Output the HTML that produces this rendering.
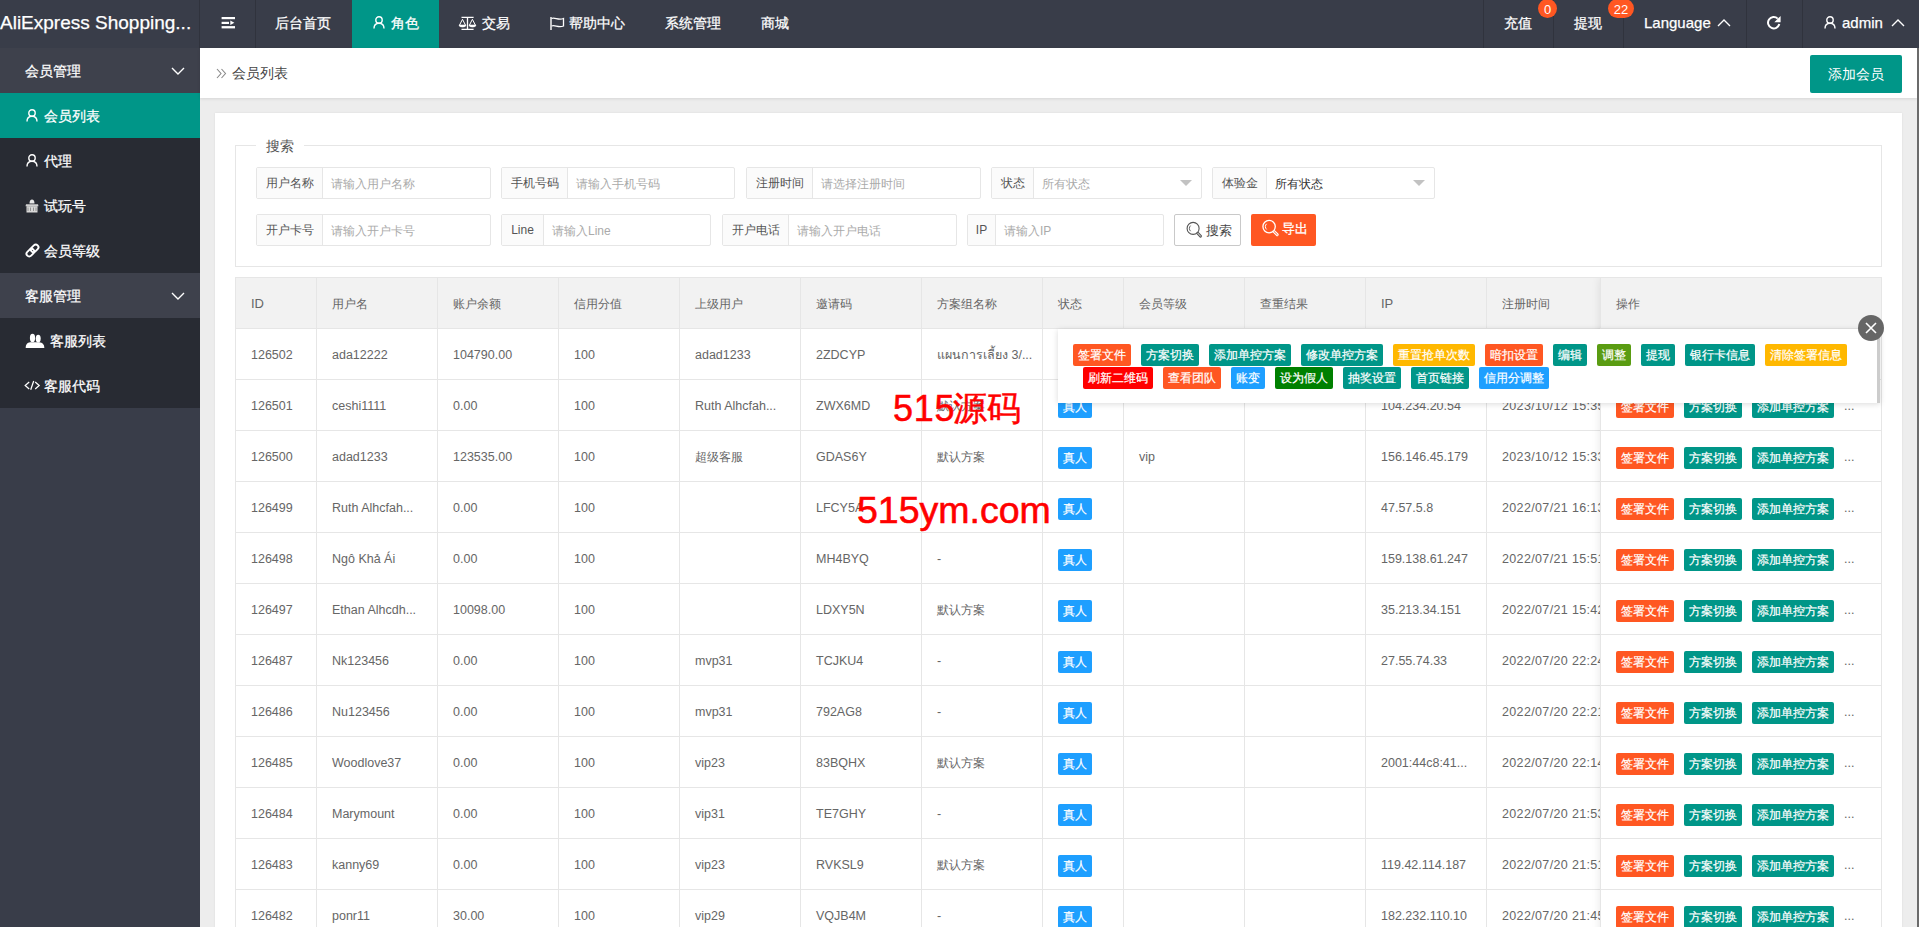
<!DOCTYPE html><html><head><meta charset="utf-8"><style>
*{box-sizing:border-box;margin:0;padding:0}
html,body{width:1919px;height:927px;overflow:hidden}
body{position:relative;background:#ededed;font-family:"Liberation Sans",sans-serif;color:#666;font-size:13px}
.abs{position:absolute}
.hdr{left:0;top:0;width:1919px;height:48px;background:#393D49}
.sep{position:absolute;top:0;width:1px;height:48px;background:#30333d}
.wt{color:#fff;position:absolute;white-space:nowrap;-webkit-text-stroke:0.25px #fff}
.side{left:0;top:48px;width:200px;height:879px;background:#393D49}
.si{position:absolute;left:0;width:200px;height:45px;color:#fff;font-size:14px;line-height:46px;white-space:nowrap;-webkit-text-stroke:0.25px #fff}
.dk{background:#282B33}
.act{background:#009688}
.crumb{left:200px;top:48px;width:1717px;height:50px;background:#fff;box-shadow:0 1px 3px rgba(0,0,0,.1)}
.vbar{left:1917px;top:48px;width:2px;height:879px;background:#6b6b6b}
.card{left:215px;top:113px;width:1687px;height:830px;background:#fff;box-shadow:0 0 2px rgba(0,0,0,.08)}
.fs{left:235px;top:145px;width:1647px;height:122px;border:1px solid #e6e6e6}
.ig{position:absolute;height:32px;border:1px solid #e6e6e6;border-radius:2px;background:#fff}
.ig .lb{position:absolute;left:0;top:0;height:30px;background:#FBFBFB;border-right:1px solid #e6e6e6;color:#555;font-size:12px;line-height:30px;text-align:center;white-space:nowrap}
.ig .ph{position:absolute;top:1px;height:30px;line-height:30px;color:#aaa;font-size:12px;white-space:nowrap}
.tb{left:235px;top:277px;width:1647px;height:700px;border:1px solid #e6e6e6;border-bottom:none;overflow:hidden}
.th{position:absolute;left:0;top:0;width:1647px;height:51px;background:#f2f2f2;border-bottom:1px solid #e6e6e6}
.cell{position:absolute;white-space:nowrap;font-size:12.5px;color:#666;line-height:20px}
.vl{position:absolute;top:0;width:1px;height:700px;background:#e6e6e6}
.hl{position:absolute;left:0;width:1647px;height:1px;background:#e6e6e6}
.btn{position:absolute;height:22px;line-height:22px;padding:0 5px;color:#fff;font-size:12px;border-radius:2px;white-space:nowrap;text-align:center;-webkit-text-stroke:0.2px #fff}
.tag{position:absolute;width:34px;height:22px;line-height:22px;background:#1E9FFF;color:#fff;font-size:12px;border-radius:2px;text-align:center;-webkit-text-stroke:0.2px #fff}
.fixed{position:absolute;left:1364px;top:0;width:283px;height:700px;background:#fff;box-shadow:-1px 0 8px rgba(0,0,0,.08)}
.pop{left:1058px;top:329px;width:822px;height:74px;background:#fff;box-shadow:0 1px 6px rgba(0,0,0,.15)}
</style></head><body>
<div class="abs hdr">
<div class="wt" style="left:0;top:10px;font-size:19px;line-height:26px">AliExpress Shopping...</div>
<div class="sep" style="left:199px"></div>
<div class="sep" style="left:255px"></div>
<div class="sep" style="left:1483px"></div>
<div class="sep" style="left:1553px"></div>
<div class="sep" style="left:1623px"></div>
<div class="sep" style="left:1746px"></div>
<div class="sep" style="left:1802px"></div>
<svg class="abs" style="left:221px;top:17px" width="15" height="12" viewBox="0 0 15 12"><rect x="0.6" y="0" width="13.4" height="2.2" fill="#fff"/><rect x="0.6" y="4.8" width="7.4" height="2.2" fill="#fff"/><rect x="0.6" y="9.1" width="13.4" height="2.3" fill="#fff"/><path d="M9.3 3.4 L13.4 5.8 L9.3 8 Z" fill="#fff"/></svg>
<div class="wt" style="left:275px;top:14px;font-size:14px;line-height:18px">后台首页</div>
<div class="abs" style="left:352px;top:0;width:87px;height:48px;background:#009688"></div>
<svg class="abs" style="left:373px;top:16px" width="12" height="13" viewBox="0 0 12 13"><circle cx="6" cy="4" r="3.2" fill="none" stroke="#fff" stroke-width="1.4"/><path d="M1 12.5 C1 8.5 3 7.2 6 7.2 C9 7.2 11 8.5 11 12.5" fill="none" stroke="#fff" stroke-width="1.4"/></svg>
<div class="wt" style="left:391px;top:14px;font-size:14px;line-height:18px">角色</div>
<svg class="abs" style="left:458px;top:16px" width="20" height="16" viewBox="0 0 20 16"><path d="M3.5 1.4 H15.6 M9.5 1 V13.5 M3.5 13.3 H15.6" stroke="#fff" stroke-width="1.3" fill="none"/><path d="M1.6 9 L4.5 3.3 L7.4 9 M11.5 9 L14.4 3.3 L17.3 9" stroke="#fff" stroke-width="1" fill="none"/><path d="M1 9 H8 A3.5 2 0 0 1 1 9 Z M11 9 H18 A3.5 2 0 0 1 11 9 Z" fill="#fff" stroke="#fff" stroke-width="0.6"/></svg>
<div class="wt" style="left:482px;top:14px;font-size:14px;line-height:18px">交易</div>
<svg class="abs" style="left:550px;top:17px" width="15" height="13" viewBox="0 0 15 13"><path d="M1 0 V13" stroke="#fff" stroke-width="1.4"/><path d="M1.5 1.5 C5 0 8 3.5 13.5 1.5 V9 C8 11 5 7.5 1.5 9" stroke="#fff" stroke-width="1.3" fill="none"/></svg>
<div class="wt" style="left:569px;top:14px;font-size:14px;line-height:18px">帮助中心</div>
<div class="wt" style="left:665px;top:14px;font-size:14px;line-height:18px">系统管理</div>
<div class="wt" style="left:761px;top:14px;font-size:14px;line-height:18px">商城</div>
<div class="wt" style="left:1504px;top:14px;font-size:14px;line-height:18px">充值</div>
<div class="abs" style="left:1538px;top:-1px;width:19px;height:19px;border-radius:10px;background:#FF5722;color:#fff;font-size:13px;line-height:21px;text-align:center">0</div>
<div class="wt" style="left:1574px;top:14px;font-size:14px;line-height:18px">提现</div>
<div class="abs" style="left:1608px;top:-1px;width:26px;height:19px;border-radius:10px;background:#FF5722;color:#fff;font-size:13px;line-height:21px;text-align:center">22</div>
<div class="wt" style="left:1644px;top:13px;font-size:15px;line-height:20px">Language</div>
<svg class="abs" style="left:1717px;top:19px" width="14" height="8" viewBox="0 0 14 8"><path d="M1 7 L7 1 L13 7" stroke="#fff" stroke-width="1.4" fill="none"/></svg>
<svg class="abs" style="left:1767px;top:16px" width="15" height="14" viewBox="0 0 15 14"><path d="M10.7 2.6 A5.7 5.7 0 1 0 12.3 8.0" stroke="#fff" stroke-width="2" fill="none"/><path d="M13.6 0 V6.2 H7.3 Z" fill="#fff"/></svg>
<svg class="abs" style="left:1824px;top:16.4px" width="12" height="13" viewBox="0 0 12 13"><circle cx="6" cy="4" r="3.2" fill="none" stroke="#fff" stroke-width="1.4"/><path d="M1 12.5 C1 8.5 3 7.2 6 7.2 C9 7.2 11 8.5 11 12.5" fill="none" stroke="#fff" stroke-width="1.4"/></svg>
<div class="wt" style="left:1842px;top:13px;font-size:15px;line-height:20px">admin</div>
<svg class="abs" style="left:1891px;top:19px" width="14" height="8" viewBox="0 0 14 8"><path d="M1 7 L7 1 L13 7" stroke="#fff" stroke-width="1.4" fill="none"/></svg>
</div>
<div class="abs side">
<div class="si" style="top:0;padding-left:25px;background:#3e414c">会员管理</div>
<svg class="abs" style="left:171px;top:19px" width="14" height="8" viewBox="0 0 14 8"><path d="M1 1 L7 7 L13 1" stroke="#fff" stroke-width="1.4" fill="none"/></svg>
<div class="si act" style="top:45px;padding-left:44px">会员列表</div>
<svg class="abs" style="left:26px;top:61px" width="12" height="13" viewBox="0 0 12 13"><circle cx="6" cy="4" r="3.2" fill="none" stroke="#fff" stroke-width="1.4"/><path d="M1 12.5 C1 8.5 3 7.2 6 7.2 C9 7.2 11 8.5 11 12.5" fill="none" stroke="#fff" stroke-width="1.4"/></svg>
<div class="si dk" style="top:90px;padding-left:44px">代理</div>
<svg class="abs" style="left:26px;top:106px" width="12" height="13" viewBox="0 0 12 13"><circle cx="6" cy="4" r="3.2" fill="none" stroke="#fff" stroke-width="1.4"/><path d="M1 12.5 C1 8.5 3 7.2 6 7.2 C9 7.2 11 8.5 11 12.5" fill="none" stroke="#fff" stroke-width="1.4"/></svg>
<div class="si dk" style="top:135px;padding-left:44px">试玩号</div>
<svg class="abs" style="left:25px;top:151px" width="14" height="14" viewBox="0 0 14 14"><path d="M4.5 4.5 C4.5 2 5.5 0.6 7 0.6 C8.5 0.6 9.5 2 9.5 4.5 Z" fill="#e8e8e8"/><path d="M1 5.2 H13 L13.5 7.2 H0.5 Z" fill="#cfcfcf"/><rect x="1.5" y="7.2" width="11" height="6.3" fill="#d8d8d8"/><path d="M3 8.5 V12 M5.5 8.5 V12 M8.5 8.5 V12 M11 8.5 V12" stroke="#8a8a8a" stroke-width="0.9"/></svg>
<div class="si dk" style="top:180px;padding-left:44px">会员等级</div>
<svg class="abs" style="left:24px;top:194px" width="17" height="17" viewBox="0 0 17 17"><g transform="rotate(-45 8.5 8.5)"><rect x="1.2" y="5.8" width="8.6" height="5.4" rx="2.7" fill="none" stroke="#fff" stroke-width="1.9"/><rect x="7.2" y="5.8" width="8.6" height="5.4" rx="2.7" fill="none" stroke="#fff" stroke-width="1.9"/></g></svg>
<div class="si" style="top:225px;padding-left:25px;background:#3e414c">客服管理</div>
<svg class="abs" style="left:171px;top:244px" width="14" height="8" viewBox="0 0 14 8"><path d="M1 1 L7 7 L13 1" stroke="#fff" stroke-width="1.4" fill="none"/></svg>
<div class="si dk" style="top:270px;padding-left:50px">客服列表</div>
<svg class="abs" style="left:25px;top:285px" width="20" height="16" viewBox="0 0 20 16"><ellipse cx="7.5" cy="4.9" rx="2.6" ry="4.2" fill="#fff"/><ellipse cx="13.2" cy="5.6" rx="2.5" ry="3.9" fill="#fff"/><path d="M0.7 15 C0.7 11.3 2.2 9.8 5.2 9.3 H14.2 C17.6 9.8 19.3 11.3 19.3 15 Z" fill="#fff"/></svg>
<div class="si dk" style="top:315px;padding-left:44px">客服代码</div>
<svg class="abs" style="left:24px;top:332px" width="17" height="11" viewBox="0 0 17 11"><path d="M5.2 2 L1.2 5.5 L5.2 9 M11.2 2 L15.2 5.5 L11.2 9 M9.7 1 L6.7 9.8" stroke="#fff" stroke-width="1.25" fill="none"/></svg>
</div>
<div class="abs crumb">
<svg class="abs" style="left:16px;top:20px" width="11" height="11" viewBox="0 0 11 11"><path d="M1 1 L5 5.5 L1 10 M5.5 1 L9.5 5.5 L5.5 10" stroke="#888" stroke-width="1.1" fill="none"/></svg>
<div class="abs" style="left:32px;top:16px;font-size:14px;line-height:18px;color:#444;white-space:nowrap">会员列表</div>
<div class="abs" style="left:1610px;top:7px;width:92px;height:38px;background:#009688;border-radius:2px;color:#fff;font-size:14px;line-height:38px;text-align:center">添加会员</div>
</div>
<div class="abs vbar"></div>
<div class="abs card"></div>
<div class="abs fs"></div>
<div class="abs" style="left:256px;top:136px;width:48px;height:20px;background:#fff;color:#555;font-size:14px;line-height:20px;text-align:center">搜索</div>
<div class="ig" style="left:256px;top:167px;width:235px"><div class="lb" style="width:66px">用户名称</div><div class="ph" style="left:74px">请输入用户名称</div></div>
<div class="ig" style="left:501px;top:167px;width:234px"><div class="lb" style="width:66px">手机号码</div><div class="ph" style="left:74px">请输入手机号码</div></div>
<div class="ig" style="left:746px;top:167px;width:235px"><div class="lb" style="width:66px">注册时间</div><div class="ph" style="left:74px">请选择注册时间</div></div>
<div class="ig" style="left:991px;top:167px;width:211px"><div class="lb" style="width:42px">状态</div><div class="ph" style="left:50px">所有状态</div><svg class="abs" style="left:188px;top:12px" width="12" height="7" viewBox="0 0 12 7"><path d="M0 0 H12 L6 6 Z" fill="#c2c2c2"/></svg></div>
<div class="ig" style="left:1212px;top:167px;width:223px"><div class="lb" style="width:54px">体验金</div><div class="ph" style="left:62px;color:#333">所有状态</div><svg class="abs" style="left:200px;top:12px" width="12" height="7" viewBox="0 0 12 7"><path d="M0 0 H12 L6 6 Z" fill="#c2c2c2"/></svg></div>
<div class="ig" style="left:256px;top:214px;width:235px"><div class="lb" style="width:66px">开户卡号</div><div class="ph" style="left:74px">请输入开户卡号</div></div>
<div class="ig" style="left:501px;top:214px;width:210px"><div class="lb" style="width:42px">Line</div><div class="ph" style="left:50px">请输入Line</div></div>
<div class="ig" style="left:722px;top:214px;width:235px"><div class="lb" style="width:66px">开户电话</div><div class="ph" style="left:74px">请输入开户电话</div></div>
<div class="ig" style="left:967px;top:214px;width:197px"><div class="lb" style="width:28px">IP</div><div class="ph" style="left:36px">请输入IP</div></div>
<div class="abs" style="left:1174px;top:214px;width:67px;height:32px;border:1px solid #c9c9c9;border-radius:2px;background:#fff"></div>
<svg class="abs" style="left:1186px;top:221px" width="17" height="17" viewBox="0 0 17 17"><circle cx="7.1" cy="7.4" r="6" stroke="#555" stroke-width="1.1" fill="none"/><path d="M4.6 4.6 A3.8 3.8 0 0 0 4.6 10.2" stroke="#555" stroke-width="0.9" fill="none"/><path d="M11.8 12.2 L14.6 15.2" stroke="#555" stroke-width="2.8" stroke-linecap="round"/><path d="M11.8 12.2 L14.6 15.2" stroke="#fff" stroke-width="0.9" stroke-linecap="round"/></svg>
<div class="abs" style="left:1206px;top:222px;font-size:13px;line-height:18px;color:#444">搜索</div>
<div class="abs" style="left:1251px;top:214px;width:65px;height:32px;border-radius:2px;background:#FF5722"></div>
<svg class="abs" style="left:1262px;top:219px" width="18" height="18" viewBox="0 0 18 18"><circle cx="7.1" cy="7.6" r="6.2" stroke="#fff" stroke-width="1.3" fill="none"/><path d="M4.6 4.8 A3.8 3.8 0 0 0 4.6 10.4" stroke="#fff" stroke-width="1" fill="none"/><path d="M12 12.5 L15.2 15.6" stroke="#fff" stroke-width="3" stroke-linecap="round"/><path d="M12 12.5 L15.2 15.6" stroke="#FF5722" stroke-width="1" stroke-linecap="round"/></svg>
<div class="abs" style="left:1282px;top:219.5px;font-size:13px;line-height:18px;color:#fff;-webkit-text-stroke:0.3px #fff">导出</div>
<div class="abs tb">
<div class="th"></div>
<div class="vl" style="left:80px"></div>
<div class="vl" style="left:201px"></div>
<div class="vl" style="left:322px"></div>
<div class="vl" style="left:443px"></div>
<div class="vl" style="left:564px"></div>
<div class="vl" style="left:685px"></div>
<div class="vl" style="left:806px"></div>
<div class="vl" style="left:887px"></div>
<div class="vl" style="left:1008px"></div>
<div class="vl" style="left:1129px"></div>
<div class="vl" style="left:1250px"></div>
<div class="hl" style="top:50px"></div>
<div class="hl" style="top:101px"></div>
<div class="hl" style="top:152px"></div>
<div class="hl" style="top:203px"></div>
<div class="hl" style="top:254px"></div>
<div class="hl" style="top:305px"></div>
<div class="hl" style="top:356px"></div>
<div class="hl" style="top:407px"></div>
<div class="hl" style="top:458px"></div>
<div class="hl" style="top:509px"></div>
<div class="hl" style="top:560px"></div>
<div class="hl" style="top:611px"></div>
<div class="hl" style="top:662px"></div>
<div class="cell" style="left:15px;top:16px;font-size:13px">ID</div>
<div class="cell" style="left:96px;top:16px;font-size:12px">用户名</div>
<div class="cell" style="left:217px;top:16px;font-size:12px">账户余额</div>
<div class="cell" style="left:338px;top:16px;font-size:12px">信用分值</div>
<div class="cell" style="left:459px;top:16px;font-size:12px">上级用户</div>
<div class="cell" style="left:580px;top:16px;font-size:12px">邀请码</div>
<div class="cell" style="left:701px;top:16px;font-size:12px">方案组名称</div>
<div class="cell" style="left:822px;top:16px;font-size:12px">状态</div>
<div class="cell" style="left:903px;top:16px;font-size:12px">会员等级</div>
<div class="cell" style="left:1024px;top:16px;font-size:12px">查重结果</div>
<div class="cell" style="left:1145px;top:16px;font-size:13px">IP</div>
<div class="cell" style="left:1266px;top:16px;font-size:12px">注册时间</div>
<div class="cell" style="left:15px;top:67px;font-size:12.5px;">126502</div>
<div class="cell" style="left:96px;top:67px;font-size:12.5px;">ada12222</div>
<div class="cell" style="left:217px;top:67px;font-size:12.5px;">104790.00</div>
<div class="cell" style="left:338px;top:67px;font-size:12.5px;">100</div>
<div class="cell" style="left:459px;top:67px;font-size:12.5px;">adad1233</div>
<div class="cell" style="left:580px;top:67px;font-size:12.5px;">2ZDCYP</div>
<div class="cell" style="left:701px;top:67px;font-size:12.5px;">แผนการเลี้ยง 3/...</div>
<div class="cell" style="left:15px;top:118px;font-size:12.5px;">126501</div>
<div class="cell" style="left:96px;top:118px;font-size:12.5px;">ceshi1111</div>
<div class="cell" style="left:217px;top:118px;font-size:12.5px;">0.00</div>
<div class="cell" style="left:338px;top:118px;font-size:12.5px;">100</div>
<div class="cell" style="left:459px;top:118px;font-size:12.5px;">Ruth Alhcfah...</div>
<div class="cell" style="left:580px;top:118px;font-size:12.5px;">ZWX6MD</div>
<div class="cell" style="left:701px;top:118px;font-size:12px;">默认方案</div>
<div class="tag" style="left:822px;top:118px">真人</div>
<div class="cell" style="left:1145px;top:118px;font-size:12.5px;">104.234.20.54</div>
<div class="cell" style="left:1266px;top:118px;font-size:12.5px;letter-spacing:0.35px;">2023/10/12 15:35</div>
<div class="cell" style="left:15px;top:169px;font-size:12.5px;">126500</div>
<div class="cell" style="left:96px;top:169px;font-size:12.5px;">adad1233</div>
<div class="cell" style="left:217px;top:169px;font-size:12.5px;">123535.00</div>
<div class="cell" style="left:338px;top:169px;font-size:12.5px;">100</div>
<div class="cell" style="left:459px;top:169px;font-size:12px;">超级客服</div>
<div class="cell" style="left:580px;top:169px;font-size:12.5px;">GDAS6Y</div>
<div class="cell" style="left:701px;top:169px;font-size:12px;">默认方案</div>
<div class="tag" style="left:822px;top:169px">真人</div>
<div class="cell" style="left:903px;top:169px;font-size:12.5px;">vip</div>
<div class="cell" style="left:1145px;top:169px;font-size:12.5px;">156.146.45.179</div>
<div class="cell" style="left:1266px;top:169px;font-size:12.5px;letter-spacing:0.35px;">2023/10/12 15:33</div>
<div class="cell" style="left:15px;top:220px;font-size:12.5px;">126499</div>
<div class="cell" style="left:96px;top:220px;font-size:12.5px;">Ruth Alhcfah...</div>
<div class="cell" style="left:217px;top:220px;font-size:12.5px;">0.00</div>
<div class="cell" style="left:338px;top:220px;font-size:12.5px;">100</div>
<div class="cell" style="left:580px;top:220px;font-size:12.5px;">LFCY5A</div>
<div class="tag" style="left:822px;top:220px">真人</div>
<div class="cell" style="left:1145px;top:220px;font-size:12.5px;">47.57.5.8</div>
<div class="cell" style="left:1266px;top:220px;font-size:12.5px;letter-spacing:0.35px;">2022/07/21 16:13</div>
<div class="cell" style="left:15px;top:271px;font-size:12.5px;">126498</div>
<div class="cell" style="left:96px;top:271px;font-size:12.5px;">Ngô Khả Ái</div>
<div class="cell" style="left:217px;top:271px;font-size:12.5px;">0.00</div>
<div class="cell" style="left:338px;top:271px;font-size:12.5px;">100</div>
<div class="cell" style="left:580px;top:271px;font-size:12.5px;">MH4BYQ</div>
<div class="cell" style="left:701px;top:271px;font-size:12.5px;">-</div>
<div class="tag" style="left:822px;top:271px">真人</div>
<div class="cell" style="left:1145px;top:271px;font-size:12.5px;">159.138.61.247</div>
<div class="cell" style="left:1266px;top:271px;font-size:12.5px;letter-spacing:0.35px;">2022/07/21 15:51</div>
<div class="cell" style="left:15px;top:322px;font-size:12.5px;">126497</div>
<div class="cell" style="left:96px;top:322px;font-size:12.5px;">Ethan Alhcdh...</div>
<div class="cell" style="left:217px;top:322px;font-size:12.5px;">10098.00</div>
<div class="cell" style="left:338px;top:322px;font-size:12.5px;">100</div>
<div class="cell" style="left:580px;top:322px;font-size:12.5px;">LDXY5N</div>
<div class="cell" style="left:701px;top:322px;font-size:12px;">默认方案</div>
<div class="tag" style="left:822px;top:322px">真人</div>
<div class="cell" style="left:1145px;top:322px;font-size:12.5px;">35.213.34.151</div>
<div class="cell" style="left:1266px;top:322px;font-size:12.5px;letter-spacing:0.35px;">2022/07/21 15:42</div>
<div class="cell" style="left:15px;top:373px;font-size:12.5px;">126487</div>
<div class="cell" style="left:96px;top:373px;font-size:12.5px;">Nk123456</div>
<div class="cell" style="left:217px;top:373px;font-size:12.5px;">0.00</div>
<div class="cell" style="left:338px;top:373px;font-size:12.5px;">100</div>
<div class="cell" style="left:459px;top:373px;font-size:12.5px;">mvp31</div>
<div class="cell" style="left:580px;top:373px;font-size:12.5px;">TCJKU4</div>
<div class="cell" style="left:701px;top:373px;font-size:12.5px;">-</div>
<div class="tag" style="left:822px;top:373px">真人</div>
<div class="cell" style="left:1145px;top:373px;font-size:12.5px;">27.55.74.33</div>
<div class="cell" style="left:1266px;top:373px;font-size:12.5px;letter-spacing:0.35px;">2022/07/20 22:24</div>
<div class="cell" style="left:15px;top:424px;font-size:12.5px;">126486</div>
<div class="cell" style="left:96px;top:424px;font-size:12.5px;">Nu123456</div>
<div class="cell" style="left:217px;top:424px;font-size:12.5px;">0.00</div>
<div class="cell" style="left:338px;top:424px;font-size:12.5px;">100</div>
<div class="cell" style="left:459px;top:424px;font-size:12.5px;">mvp31</div>
<div class="cell" style="left:580px;top:424px;font-size:12.5px;">792AG8</div>
<div class="cell" style="left:701px;top:424px;font-size:12.5px;">-</div>
<div class="tag" style="left:822px;top:424px">真人</div>
<div class="cell" style="left:1266px;top:424px;font-size:12.5px;letter-spacing:0.35px;">2022/07/20 22:21</div>
<div class="cell" style="left:15px;top:475px;font-size:12.5px;">126485</div>
<div class="cell" style="left:96px;top:475px;font-size:12.5px;">Woodlove37</div>
<div class="cell" style="left:217px;top:475px;font-size:12.5px;">0.00</div>
<div class="cell" style="left:338px;top:475px;font-size:12.5px;">100</div>
<div class="cell" style="left:459px;top:475px;font-size:12.5px;">vip23</div>
<div class="cell" style="left:580px;top:475px;font-size:12.5px;">83BQHX</div>
<div class="cell" style="left:701px;top:475px;font-size:12px;">默认方案</div>
<div class="tag" style="left:822px;top:475px">真人</div>
<div class="cell" style="left:1145px;top:475px;font-size:12.5px;">2001:44c8:41...</div>
<div class="cell" style="left:1266px;top:475px;font-size:12.5px;letter-spacing:0.35px;">2022/07/20 22:14</div>
<div class="cell" style="left:15px;top:526px;font-size:12.5px;">126484</div>
<div class="cell" style="left:96px;top:526px;font-size:12.5px;">Marymount</div>
<div class="cell" style="left:217px;top:526px;font-size:12.5px;">0.00</div>
<div class="cell" style="left:338px;top:526px;font-size:12.5px;">100</div>
<div class="cell" style="left:459px;top:526px;font-size:12.5px;">vip31</div>
<div class="cell" style="left:580px;top:526px;font-size:12.5px;">TE7GHY</div>
<div class="cell" style="left:701px;top:526px;font-size:12.5px;">-</div>
<div class="tag" style="left:822px;top:526px">真人</div>
<div class="cell" style="left:1266px;top:526px;font-size:12.5px;letter-spacing:0.35px;">2022/07/20 21:53</div>
<div class="cell" style="left:15px;top:577px;font-size:12.5px;">126483</div>
<div class="cell" style="left:96px;top:577px;font-size:12.5px;">kanny69</div>
<div class="cell" style="left:217px;top:577px;font-size:12.5px;">0.00</div>
<div class="cell" style="left:338px;top:577px;font-size:12.5px;">100</div>
<div class="cell" style="left:459px;top:577px;font-size:12.5px;">vip23</div>
<div class="cell" style="left:580px;top:577px;font-size:12.5px;">RVKSL9</div>
<div class="cell" style="left:701px;top:577px;font-size:12px;">默认方案</div>
<div class="tag" style="left:822px;top:577px">真人</div>
<div class="cell" style="left:1145px;top:577px;font-size:12.5px;">119.42.114.187</div>
<div class="cell" style="left:1266px;top:577px;font-size:12.5px;letter-spacing:0.35px;">2022/07/20 21:51</div>
<div class="cell" style="left:15px;top:628px;font-size:12.5px;">126482</div>
<div class="cell" style="left:96px;top:628px;font-size:12.5px;">ponr11</div>
<div class="cell" style="left:217px;top:628px;font-size:12.5px;">30.00</div>
<div class="cell" style="left:338px;top:628px;font-size:12.5px;">100</div>
<div class="cell" style="left:459px;top:628px;font-size:12.5px;">vip29</div>
<div class="cell" style="left:580px;top:628px;font-size:12.5px;">VQJB4M</div>
<div class="cell" style="left:701px;top:628px;font-size:12.5px;">-</div>
<div class="tag" style="left:822px;top:628px">真人</div>
<div class="cell" style="left:1145px;top:628px;font-size:12.5px;">182.232.110.10</div>
<div class="cell" style="left:1266px;top:628px;font-size:12.5px;letter-spacing:0.35px;">2022/07/20 21:45</div>
<div class="fixed">
<div style="position:absolute;left:0;top:0;width:283px;height:51px;background:#f2f2f2;border-bottom:1px solid #e6e6e6;border-left:1px solid #e6e6e6"></div>
<div class="cell" style="left:16px;top:16px;font-size:12px">操作</div>
<div style="position:absolute;left:0;top:0;width:1px;height:700px;background:#e6e6e6"></div>
<div style="position:absolute;left:0;top:101px;width:282px;height:1px;background:#e6e6e6"></div>
<div class="btn" style="left:16px;top:67px;width:58px;background:#FF5722">签署文件</div>
<div class="btn" style="left:84px;top:67px;width:58px;background:#009688">方案切换</div>
<div class="btn" style="left:152px;top:67px;width:82px;background:#009688">添加单控方案</div>
<div class="cell" style="left:244px;top:67px">...</div>
<div style="position:absolute;left:0;top:152px;width:282px;height:1px;background:#e6e6e6"></div>
<div class="btn" style="left:16px;top:118px;width:58px;background:#FF5722">签署文件</div>
<div class="btn" style="left:84px;top:118px;width:58px;background:#009688">方案切换</div>
<div class="btn" style="left:152px;top:118px;width:82px;background:#009688">添加单控方案</div>
<div class="cell" style="left:244px;top:118px">...</div>
<div style="position:absolute;left:0;top:203px;width:282px;height:1px;background:#e6e6e6"></div>
<div class="btn" style="left:16px;top:169px;width:58px;background:#FF5722">签署文件</div>
<div class="btn" style="left:84px;top:169px;width:58px;background:#009688">方案切换</div>
<div class="btn" style="left:152px;top:169px;width:82px;background:#009688">添加单控方案</div>
<div class="cell" style="left:244px;top:169px">...</div>
<div style="position:absolute;left:0;top:254px;width:282px;height:1px;background:#e6e6e6"></div>
<div class="btn" style="left:16px;top:220px;width:58px;background:#FF5722">签署文件</div>
<div class="btn" style="left:84px;top:220px;width:58px;background:#009688">方案切换</div>
<div class="btn" style="left:152px;top:220px;width:82px;background:#009688">添加单控方案</div>
<div class="cell" style="left:244px;top:220px">...</div>
<div style="position:absolute;left:0;top:305px;width:282px;height:1px;background:#e6e6e6"></div>
<div class="btn" style="left:16px;top:271px;width:58px;background:#FF5722">签署文件</div>
<div class="btn" style="left:84px;top:271px;width:58px;background:#009688">方案切换</div>
<div class="btn" style="left:152px;top:271px;width:82px;background:#009688">添加单控方案</div>
<div class="cell" style="left:244px;top:271px">...</div>
<div style="position:absolute;left:0;top:356px;width:282px;height:1px;background:#e6e6e6"></div>
<div class="btn" style="left:16px;top:322px;width:58px;background:#FF5722">签署文件</div>
<div class="btn" style="left:84px;top:322px;width:58px;background:#009688">方案切换</div>
<div class="btn" style="left:152px;top:322px;width:82px;background:#009688">添加单控方案</div>
<div class="cell" style="left:244px;top:322px">...</div>
<div style="position:absolute;left:0;top:407px;width:282px;height:1px;background:#e6e6e6"></div>
<div class="btn" style="left:16px;top:373px;width:58px;background:#FF5722">签署文件</div>
<div class="btn" style="left:84px;top:373px;width:58px;background:#009688">方案切换</div>
<div class="btn" style="left:152px;top:373px;width:82px;background:#009688">添加单控方案</div>
<div class="cell" style="left:244px;top:373px">...</div>
<div style="position:absolute;left:0;top:458px;width:282px;height:1px;background:#e6e6e6"></div>
<div class="btn" style="left:16px;top:424px;width:58px;background:#FF5722">签署文件</div>
<div class="btn" style="left:84px;top:424px;width:58px;background:#009688">方案切换</div>
<div class="btn" style="left:152px;top:424px;width:82px;background:#009688">添加单控方案</div>
<div class="cell" style="left:244px;top:424px">...</div>
<div style="position:absolute;left:0;top:509px;width:282px;height:1px;background:#e6e6e6"></div>
<div class="btn" style="left:16px;top:475px;width:58px;background:#FF5722">签署文件</div>
<div class="btn" style="left:84px;top:475px;width:58px;background:#009688">方案切换</div>
<div class="btn" style="left:152px;top:475px;width:82px;background:#009688">添加单控方案</div>
<div class="cell" style="left:244px;top:475px">...</div>
<div style="position:absolute;left:0;top:560px;width:282px;height:1px;background:#e6e6e6"></div>
<div class="btn" style="left:16px;top:526px;width:58px;background:#FF5722">签署文件</div>
<div class="btn" style="left:84px;top:526px;width:58px;background:#009688">方案切换</div>
<div class="btn" style="left:152px;top:526px;width:82px;background:#009688">添加单控方案</div>
<div class="cell" style="left:244px;top:526px">...</div>
<div style="position:absolute;left:0;top:611px;width:282px;height:1px;background:#e6e6e6"></div>
<div class="btn" style="left:16px;top:577px;width:58px;background:#FF5722">签署文件</div>
<div class="btn" style="left:84px;top:577px;width:58px;background:#009688">方案切换</div>
<div class="btn" style="left:152px;top:577px;width:82px;background:#009688">添加单控方案</div>
<div class="cell" style="left:244px;top:577px">...</div>
<div style="position:absolute;left:0;top:662px;width:282px;height:1px;background:#e6e6e6"></div>
<div class="btn" style="left:16px;top:628px;width:58px;background:#FF5722">签署文件</div>
<div class="btn" style="left:84px;top:628px;width:58px;background:#009688">方案切换</div>
<div class="btn" style="left:152px;top:628px;width:82px;background:#009688">添加单控方案</div>
<div class="cell" style="left:244px;top:628px">...</div>
</div>
</div>
<div class="abs" style="left:893px;top:387.3px;font-size:36px;line-height:44px;color:#f00;-webkit-text-stroke:0.5px #f00;white-space:nowrap"><span style="letter-spacing:0.7px">515</span><span style="font-size:33.5px;position:relative;left:-2.5px;top:-1.5px">源码</span></div>
<div class="abs" style="left:857px;top:488px;font-size:37.5px;line-height:44px;color:#f00;-webkit-text-stroke:0.6px #f00;white-space:nowrap">515ym.com</div>
<div class="abs pop">
<div class="btn" style="left:15px;top:15px;width:58px;background:#FF5722">签署文件</div>
<div class="btn" style="left:83px;top:15px;width:58px;background:#009688">方案切换</div>
<div class="btn" style="left:151px;top:15px;width:82px;background:#009688">添加单控方案</div>
<div class="btn" style="left:243px;top:15px;width:82px;background:#009688">修改单控方案</div>
<div class="btn" style="left:335px;top:15px;width:82px;background:#FFB800">重置抢单次数</div>
<div class="btn" style="left:427px;top:15px;width:58px;background:#FF5722">暗扣设置</div>
<div class="btn" style="left:495px;top:15px;width:34px;background:#009688">编辑</div>
<div class="btn" style="left:539px;top:15px;width:34px;background:#5a9c12">调整</div>
<div class="btn" style="left:583px;top:15px;width:34px;background:#009688">提现</div>
<div class="btn" style="left:627px;top:15px;width:70px;background:#009688">银行卡信息</div>
<div class="btn" style="left:707px;top:15px;width:82px;background:#FFB800">清除签署信息</div>
<div class="btn" style="left:25px;top:38px;width:70px;background:#FF0000">刷新二维码</div>
<div class="btn" style="left:105px;top:38px;width:58px;background:#FF5722">查看团队</div>
<div class="btn" style="left:173px;top:38px;width:34px;background:#1E9FFF">账变</div>
<div class="btn" style="left:217px;top:38px;width:58px;background:#008000">设为假人</div>
<div class="btn" style="left:285px;top:38px;width:58px;background:#009688">抽奖设置</div>
<div class="btn" style="left:353px;top:38px;width:58px;background:#009688">首页链接</div>
<div class="btn" style="left:421px;top:38px;width:70px;background:#1E9FFF">信用分调整</div>
<div style="position:absolute;left:819px;top:9px;width:3px;height:65px;background:#ccc"></div>
</div>
<div class="abs" style="left:1858px;top:315px;width:26px;height:26px;border-radius:13px;background:#666"><svg style="position:absolute;left:7px;top:7px" width="12" height="12" viewBox="0 0 12 12"><path d="M1 1 L11 11 M11 1 L1 11" stroke="#fff" stroke-width="1.6"/></svg></div>
</body></html>
